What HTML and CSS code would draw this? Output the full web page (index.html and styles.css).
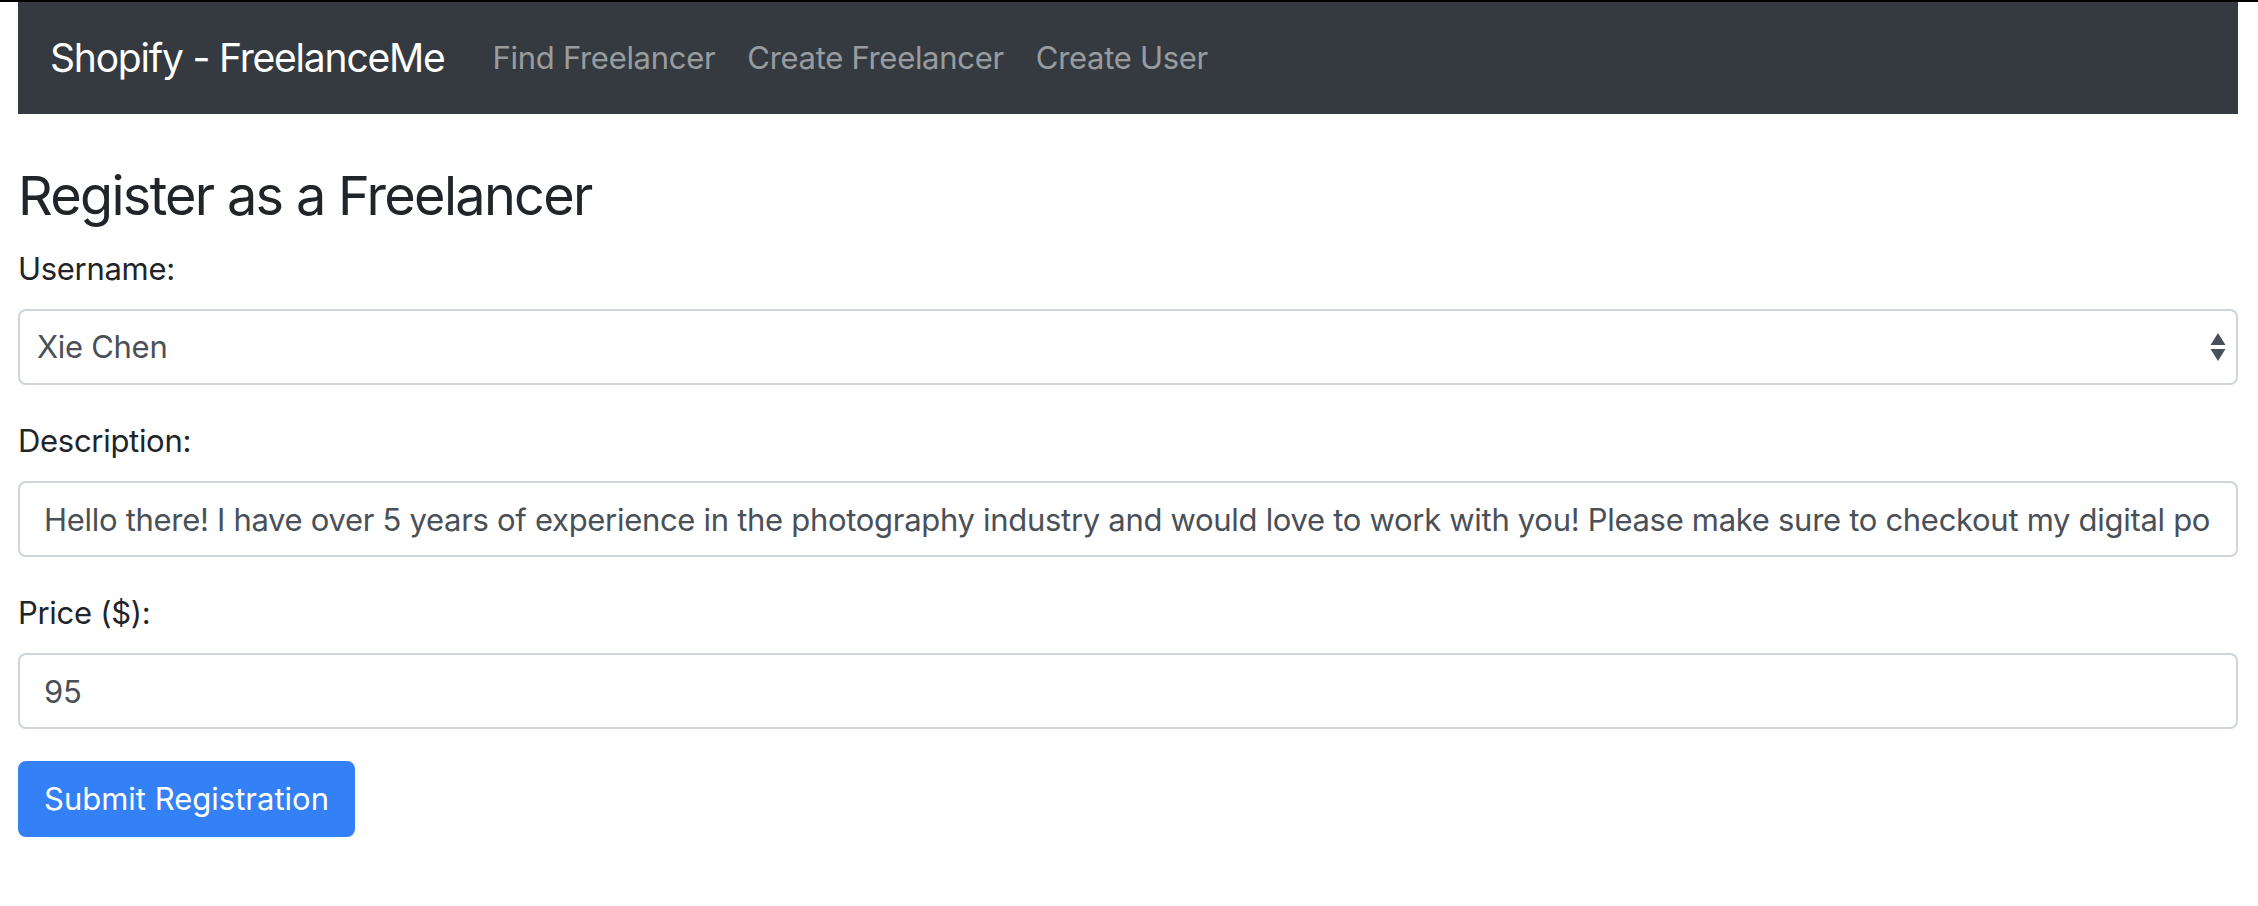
FILE: index.html
```html
<!DOCTYPE html>
<html lang="en">
<head>
<meta charset="utf-8">
<title>Shopify - FreelanceMe</title>
<link rel="stylesheet" href="styles.css">
</head>
<body>
<div class="page">
  <nav class="navbar">
    <a class="brand" href="#">Shopify - FreelanceMe</a>
    <ul class="nav">
      <li><a class="nav-link" href="#">Find Freelancer</a></li>
      <li><a class="nav-link" href="#">Create Freelancer</a></li>
      <li><a class="nav-link" href="#">Create User</a></li>
    </ul>
  </nav>
  <main class="content">
    <h3 class="title">Register as a Freelancer</h3>
    <form class="form">
      <div class="form-group">
        <label class="label" for="username">Username:</label>
        <div class="select-wrap">
          <select id="username" class="control select">
            <option>Xie Chen</option>
          </select>
          <svg class="select-arrows" width="16" height="30" viewBox="0 0 16 30" aria-hidden="true">
            <path d="M8 1 L15.5 13 L0.5 13 Z" fill="#495057"/>
            <path d="M0.5 17 L15.5 17 L8 29 Z" fill="#495057"/>
          </svg>
        </div>
      </div>
      <div class="form-group">
        <label class="label" for="description">Description:</label>
        <input id="description" class="control" type="text" value="Hello there! I have over 5 years of experience in the photography industry and would love to work with you! Please make sure to checkout my digital portfolio for more examples of my work.">
      </div>
      <div class="form-group">
        <label class="label" for="price">Price ($):</label>
        <input id="price" class="control" type="text" value="95">
      </div>
      <button class="btn" type="button">Submit Registration</button>
    </form>
  </main>
</div>
</body>
</html>
```

FILE: styles.css
```css
* {
  box-sizing: border-box;
}

html, body {
  margin: 0;
  padding: 0;
  background: #ffffff;
}

body {
  border-top: 2px solid #000000;
  font-family: Inter, "Noto Sans", "Liberation Sans", sans-serif;
  font-size: 31px;
  line-height: 48px;
  color: #212529;
}

.page {
  padding: 0 20px 0 18px;
}

.navbar {
  height: 112px;
  background: #343a40;
  display: flex;
  align-items: center;
  padding: 0 32px;
}

.brand {
  font-size: 39px;
  color: #ffffff;
  text-decoration: none;
  margin-right: 32px;
  letter-spacing: -1.2px;
}

.nav {
  list-style: none;
  margin: 0;
  padding: 0;
  display: flex;
}

.nav-link {
  display: block;
  padding: 0 16px;
  color: rgba(255, 255, 255, 0.5);
  text-decoration: none;
  letter-spacing: -0.3px;
}

.content {
  padding-top: 48px;
}

.title {
  margin: 0 0 16px 0;
  font-size: 54px;
  font-weight: 400;
  line-height: 67px;
  letter-spacing: -1.7px;
}

.form-group {
  margin-bottom: 32px;
}

.label {
  display: block;
  margin-bottom: 16px;
  letter-spacing: -0.3px;
}

.control {
  display: block;
  width: 100%;
  height: 76px;
  padding: 12px 24px;
  font-family: inherit;
  font-size: 31px;
  line-height: 48px;
  color: #495057;
  background: #ffffff;
  border: 2px solid #ced4da;
  border-radius: 8px;
  outline: none;
  letter-spacing: -0.3px;
}

.select-wrap {
  position: relative;
}

.select {
  -webkit-appearance: none;
  appearance: none;
  padding-left: 17px;
  padding-right: 56px;
}

.select-arrows {
  position: absolute;
  right: 12px;
  top: 23px;
  pointer-events: none;
}

.btn {
  display: inline-block;
  height: 76px;
  padding: 12px 24px;
  font-family: inherit;
  font-size: 31px;
  line-height: 48px;
  color: #ffffff;
  background: #3480f6;
  border: 2px solid #3480f6;
  border-radius: 8px;
}
```
